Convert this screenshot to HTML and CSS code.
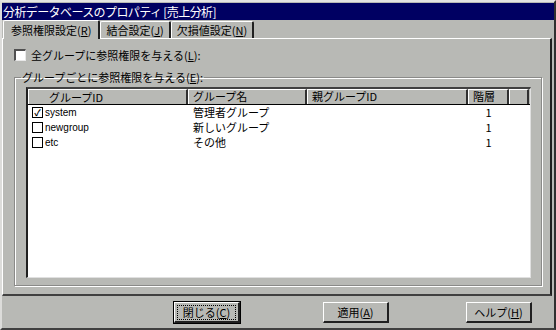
FILE: index.html
```html
<!DOCTYPE html>
<html lang="ja">

<head>
  <meta charset="UTF-8">
  <title>分析データベースのプロパティ</title>
  <link rel="stylesheet" href="styles.css">
</head>

<body>
  <div class="dialog">
    <div class="titlebar">分析データベースのプロパティ [売上分析]</div>

    <div class="tabs">
      <div class="tab active">参照権限設定(<u>R</u>)</div>
      <div class="tab">結合設定(<u>J</u>)</div>
      <div class="tab">欠損値設定(<u>N</u>)</div>
    </div>

    <div class="panel">
      <div class="check-row">
        <span class="box"></span>
        <span>全グループに参照権限を与える(<u>L</u>):</span>
      </div>

      <fieldset class="group">
        <legend>グループごとに参照権限を与える(<u>E</u>):</legend>
        <div class="list">
          <div class="list-head">
            <div class="col c-id head-id">グループID</div>
            <div class="col c-name">グループ名</div>
            <div class="col c-parent">親グループID</div>
            <div class="col c-level">階層</div>
            <div class="col c-rest"></div>
          </div>
          <div class="row">
            <div class="c-id"><span class="box small checked">&#10003;</span><span class="latin">system</span></div>
            <div class="c-name">管理者グループ</div>
            <div class="c-parent"></div>
            <div class="c-level">1</div>
          </div>
          <div class="row">
            <div class="c-id"><span class="box small"></span><span class="latin">newgroup</span></div>
            <div class="c-name">新しいグループ</div>
            <div class="c-parent"></div>
            <div class="c-level">1</div>
          </div>
          <div class="row">
            <div class="c-id"><span class="box small"></span><span class="latin">etc</span></div>
            <div class="c-name">その他</div>
            <div class="c-parent"></div>
            <div class="c-level">1</div>
          </div>
        </div>
      </fieldset>
    </div>

    <div class="buttons">
      <button class="btn default"><span class="focus">閉じる(<u>C</u>)</span></button>
      <button class="btn apply">適用(<u>A</u>)</button>
      <button class="btn help">ヘルプ(<u>H</u>)</button>
    </div>
  </div>
</body>

</html>
```

FILE: styles.css
```css
body {
  margin: 0;
  background-color: #b8b9b5;
  font-family: "Noto Sans CJK JP", "Liberation Sans", sans-serif;
  font-size: 11px;
  color: #000000;
}

u {
  text-decoration: underline;
}

.dialog {
  width: 556px;
  height: 330px;
  box-sizing: border-box;
  border-top: 2px solid #e4e4e2;
  border-left: 2px solid #dcdcda;
  border-right: 2px solid #303030;
  border-bottom: 2px solid #404040;
  display: flex;
  flex-direction: column;
}

.titlebar {
  height: 17px;
  margin-top: 1px;
  background-color: #000062;
  color: #ffffff;
  font-size: 12px;
  letter-spacing: -0.6px;
  line-height: 17px;
  padding-left: 1px;
  white-space: nowrap;
}

.tabs {
  display: flex;
  align-items: flex-end;
  height: 18px;
  padding-left: 1px;
  position: relative;
  z-index: 1;
}

.tab {
  height: 16px;
  line-height: 16px;
  padding: 0 5px;
  border-top: 1px solid #ffffff;
  border-left: 1px solid #ffffff;
  border-right: 2px solid #202020;
  border-radius: 2px 2px 0 0;
  white-space: nowrap;
}

.tab.active {
  height: 18px;
  line-height: 18px;
  margin-bottom: -1px;
  background-color: #b8b9b5;
  padding: 0 7px;
}

.panel {
  height: 258px;
  flex-shrink: 0;
  margin-right: 2px;
  box-sizing: border-box;
  border-top: 1px solid #ffffff;
  border-left: 1px solid #ffffff;
  border-right: 2px solid #202020;
  border-bottom: 2px solid #404040;
  padding: 9px 8px 0 11px;
}

.check-row {
  display: flex;
  align-items: center;
  gap: 5px;
  height: 14px;
}

.box {
  display: inline-block;
  width: 9px;
  height: 9px;
  background-color: #ffffff;
  border-top: 2px solid #505050;
  border-left: 2px solid #505050;
  border-right: 1px solid #e8e8e8;
  border-bottom: 1px solid #e8e8e8;
}

.box.small {
  width: 9px;
  height: 9px;
  border: 1px solid #000000;
  font-size: 9px;
  line-height: 9px;
  text-align: center;
  font-weight: bold;
  margin-right: 2px;
}

.group {
  margin: 7px 0 0 0;
  padding: 2px 10px 6px 11px;
  height: 217px;
  box-sizing: border-box;
  border: 1px solid #8a8a88;
  box-shadow: inset 1px 1px 0 #ffffff, 1px 1px 0 #ffffff;
}

.group legend {
  padding: 0 1px;
  margin-left: -5px;
}

.list {
  height: 191px;
  box-sizing: border-box;
  background-color: #ffffff;
  border-top: 2px solid #404040;
  border-left: 2px solid #202020;
  border-right: 1px solid #e0e0e0;
  border-bottom: 1px solid #e0e0e0;
}

.list-head {
  display: flex;
  height: 15px;
  line-height: 13px;
  background-color: #b8b9b5;
  border-bottom: 1px solid #000000;
}

.col {
  box-sizing: border-box;
  border-top: 1px solid #ffffff;
  border-left: 1px solid #ffffff;
  border-right: 2px solid #303030;
  padding-left: 4px;
  white-space: nowrap;
}

.head-id {
  padding-left: 20px;
}

.c-id {
  width: 160px;
  display: flex;
  align-items: center;
}

.c-name {
  width: 119px;
}

.c-parent {
  width: 161px;
}

.c-level {
  width: 41px;
}

.c-rest {
  width: 20px;
}

.row {
  display: flex;
  height: 15px;
  line-height: 15px;
}

.row .c-id {
  padding-left: 4px;
  box-sizing: border-box;
}

.row .c-name {
  padding-left: 5px;
  box-sizing: border-box;
}

.row .c-level {
  text-align: center;
}

.latin {
  font-family: "Liberation Sans", sans-serif;
  font-size: 10px;
}

.buttons {
  flex: 1;
  display: flex;
  align-items: center;
  padding-left: 172px;
}

.btn {
  width: 66px;
  height: 21px;
  padding: 0;
  font-family: inherit;
  font-size: 11px;
  white-space: nowrap;
  background-color: #b8b9b5;
  border-top: 1px solid #ffffff;
  border-left: 1px solid #ffffff;
  border-right: 2px solid #202020;
  border-bottom: 2px solid #202020;
}

.btn.apply {
  margin-left: 83px;
}

.btn.help {
  margin-left: 77px;
}

.btn.default {
  outline: 1px solid #000000;
}

.focus {
  display: inline-block;
  border: 1px dotted #000000;
  padding: 0 5px;
  line-height: 13px;
}
```
